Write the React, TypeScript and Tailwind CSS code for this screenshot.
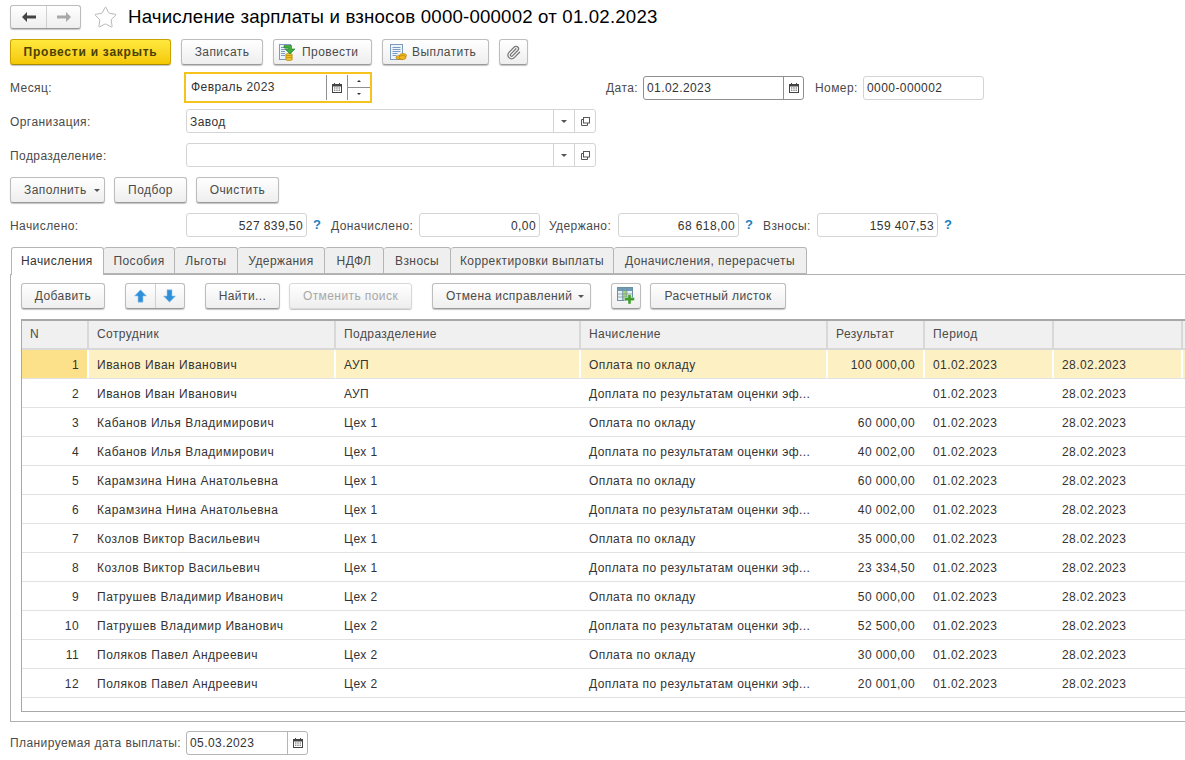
import { Star, Paperclip } from 'lucide-react';

const rows = [
  ['1', 'Иванов Иван Иванович', 'АУП', 'Оплата по окладу', '100 000,00'],
  ['2', 'Иванов Иван Иванович', 'АУП', 'Доплата по результатам оценки эф...', ''],
  ['3', 'Кабанов Илья Владимирович', 'Цех 1', 'Оплата по окладу', '60 000,00'],
  ['4', 'Кабанов Илья Владимирович', 'Цех 1', 'Доплата по результатам оценки эф...', '40 002,00'],
  ['5', 'Карамзина Нина Анатольевна', 'Цех 1', 'Оплата по окладу', '60 000,00'],
  ['6', 'Карамзина Нина Анатольевна', 'Цех 1', 'Доплата по результатам оценки эф...', '40 002,00'],
  ['7', 'Козлов Виктор Васильевич', 'Цех 1', 'Оплата по окладу', '35 000,00'],
  ['8', 'Козлов Виктор Васильевич', 'Цех 1', 'Доплата по результатам оценки эф...', '23 334,50'],
  ['9', 'Патрушев Владимир Иванович', 'Цех 2', 'Оплата по окладу', '50 000,00'],
  ['10', 'Патрушев Владимир Иванович', 'Цех 2', 'Доплата по результатам оценки эф...', '52 500,00'],
  ['11', 'Поляков Павел Андреевич', 'Цех 2', 'Оплата по окладу', '30 000,00'],
  ['12', 'Поляков Павел Андреевич', 'Цех 2', 'Доплата по результатам оценки эф...', '20 001,00'],
];

const tabs = [
  { label: 'Пособия', w: 'w-[71px]' },
  { label: 'Льготы', w: 'w-[63px]' },
  { label: 'Удержания', w: 'w-[87px]' },
  { label: 'НДФЛ', w: 'w-[59px]' },
  { label: 'Взносы', w: 'w-[67px]' },
  { label: 'Корректировки выплаты', w: 'w-[163px]' },
  { label: 'Доначисления, перерасчеты', w: 'w-[193px]' },
];

const btn = 'h-[26px] flex items-center justify-center rounded-[3px] border border-[#bdbdbd] border-b-[#9a9a9a] bg-gradient-to-b from-white to-[#eeeeee] shadow-[0_1px_1px_#c4c4c4] text-[#4a4a4a] shrink-0';

function CalendarIcon() {
  return (
    <svg width="10" height="10" viewBox="0 0 10 10">
      <path d="M2.5 0v2M7.5 0v2" stroke="#444" />
      <rect x="0.5" y="1.5" width="9" height="8" fill="#fff" stroke="#444" />
      <rect x="1" y="2" width="8" height="1.5" fill="#444" />
      <path d="M2 5h1.4M4.3 5h1.4M6.6 5H8M2 7.2h1.4M4.3 7.2h1.4M6.6 7.2H8" stroke="#555" />
    </svg>
  );
}

function Caret() {
  return <div className="w-0 h-0 border-x-[3px] border-x-transparent border-t-[3px] border-t-[#555]" />;
}

function OpenIcon() {
  return (
    <svg width="9" height="9" viewBox="0 0 9 9" fill="none" stroke="#555">
      <rect x="2.5" y="0.5" width="6" height="5.5" fill="#fff" />
      <path d="M2.5 2.5H0.5V8.5H6.5V6" />
    </svg>
  );
}

function Ref({ text }: { text?: string }) {
  return (
    <div className="ml-[2px] w-[410px] h-[24px] flex rounded-[3px] border border-[#d4d4d4]">
      <div className="flex-1 pl-[3px] leading-[24px] text-[#333]">{text}</div>
      <div className="w-[21px] flex items-center justify-center border-l border-[#d4d4d4]"><Caret /></div>
      <div className="w-[21px] flex items-center justify-center border-l border-[#d4d4d4]"><OpenIcon /></div>
    </div>
  );
}

function DateField({ value, w, dark }: { value: string; w: string; dark?: boolean }) {
  return (
    <div className={`${w} h-[24px] flex rounded-[3px] border ${dark ? 'border-[#8f8f8f]' : 'border-[#b5b5b5]'}`}>
      <div className="flex-1 pl-[3px] leading-[22px] text-[#333]">{value}</div>
      <div className={`w-[20px] flex items-center justify-center border-l ${dark ? 'border-[#8f8f8f]' : 'border-[#b5b5b5]'}`}><CalendarIcon /></div>
    </div>
  );
}

function Sum({ value }: { value: string }) {
  return <div className="w-[121px] h-[24px] rounded-[3px] border border-[#d4d4d4] text-right pr-[3px] leading-[24px] text-[#333] shrink-0">{value}</div>;
}

function Hint({ w }: { w: string }) {
  return <div className={`${w} pl-[6px] font-bold text-[#1b7fc4] text-[13px] leading-[26px]`}>?</div>;
}

function PostIcon() {
  return (
    <svg width="17" height="17" viewBox="0 0 17 17">
      <rect x="0.5" y="0.5" width="11" height="15" fill="#eef4fb" stroke="#7d9bbd" />
      <path d="M2 3.5h5M2 5.5h4M2 7.5h4M2 9.5h4M2 11.5h4" stroke="#7d9bbd" />
      <g stroke="#a87a00" strokeWidth="0.6" fill="#f4c430">
        <ellipse cx="10" cy="11" rx="3.5" ry="1.6" />
        <ellipse cx="10" cy="13" rx="3.5" ry="1.6" />
        <ellipse cx="10" cy="15" rx="3.5" ry="1.6" />
      </g>
      <path d="M5 1.5h7.5v3.5H16l-5 5-5-5h3.5V4H5z" fill="#3fae3f" stroke="#217a21" strokeWidth="0.6" />
    </svg>
  );
}

function PayIcon() {
  return (
    <svg width="17" height="17" viewBox="0 0 17 17">
      <rect x="0.5" y="0.5" width="12" height="15" fill="#eef4fb" stroke="#7d9bbd" />
      <path d="M2.5 3.5h8M2.5 5.5h8M2.5 7.5h8M2.5 9.5h5M2.5 11.5h4" stroke="#7d9bbd" />
      <g stroke="#a87a00" strokeWidth="0.6" fill="#f4b820">
        <ellipse cx="9.5" cy="13.5" rx="3.6" ry="2" />
        <ellipse cx="13" cy="11.5" rx="3.5" ry="2" />
        <ellipse cx="12.5" cy="13.5" rx="3.5" ry="2" />
      </g>
    </svg>
  );
}

function TableAddIcon() {
  return (
    <svg width="18" height="18" viewBox="0 0 18 18">
      <rect x="0.5" y="0.5" width="15" height="13" fill="#e6eff5" stroke="#6d8fa5" />
      <rect x="1" y="1" width="14" height="3" fill="#6f9bb5" />
      <rect x="5.5" y="4" width="4.5" height="9" fill="#a6cf78" />
      <path d="M5.5 1v12M10 1v12M1 7h14M1 10h14" stroke="#6d8fa5" strokeWidth="0.7" />
      <path d="M11 7.5h3v3h3.5v3H14V17h-3v-3.5H7.5v-3H11z" fill="#3f9e2c" stroke="#fff" strokeWidth="0.4" />
    </svg>
  );
}

function BlueArrow({ down }: { down?: boolean }) {
  return (
    <svg width="13" height="14" viewBox="0 0 13 14" className={down ? 'rotate-180' : ''}>
      <path d="M6.5 0.8L12.5 7H9v6.2H4V7H0.5z" fill="#2f8fd8" stroke="#9cc9ec" strokeWidth="0.6" />
    </svg>
  );
}

function Cell({ w, right, wide, children }: { w: string; right?: boolean; wide?: boolean; children?: React.ReactNode }) {
  return <div className={`${w} shrink-0 h-full px-[8px] leading-[30px] whitespace-nowrap overflow-hidden border-r-2 border-r-white ${right ? 'text-right' : ''} ${wide ? 'tracking-[0.5px]' : ''}`}>{children}</div>;
}

function Head({ w, children }: { w: string; children?: React.ReactNode }) {
  return <div className={`${w} shrink-0 h-full px-[8px] leading-[26px] border-r-2 border-r-[#d8d8d8]`}>{children}</div>;
}

export default function App() {
  return (
    <div className="w-[1185px] h-[760px] overflow-hidden bg-white text-[12px] tracking-[0.42px] text-[#4a4a4a] font-['Liberation_Sans',Arial,sans-serif]">
      <div className="pl-[10px] pt-[5px]">
        <div className="flex items-center h-[24px]">
          <div className={`${btn} !h-[24px] w-[71px] !justify-start`}>
            <div className="w-[36px] h-full flex items-center justify-center border-r border-[#d0d0d0]">
              <svg width="14" height="10" viewBox="0 0 14 10"><path d="M5 0L0 5l5 5V6.5h9v-3H5z" fill="#444" /></svg>
            </div>
            <div className="flex-1 flex items-center justify-center">
              <svg width="14" height="10" viewBox="0 0 14 10"><path d="M9 0l5 5-5 5V6.5H0v-3h9z" fill="#a8a8a8" /></svg>
            </div>
          </div>
          <Star size={25} strokeWidth={0.8} className="ml-[12px] text-[#a9a9a9]" />
          <h1 className="ml-[10px] text-[18.67px] tracking-[0.18px] text-black">Начисление зарплаты и взносов 0000-000002 от 01.02.2023</h1>
        </div>

        <div className="flex mt-[10px] h-[26px]">
          <div className="w-[161px] h-[26px] flex items-center justify-center rounded-[3px] border border-[#c9a400] border-b-[#a98a00] bg-gradient-to-b from-[#ffe93b] to-[#f5c800] shadow-[0_1px_1px_#c4c4c4] font-bold tracking-[0.75px] text-[#4a4000]">Провести и закрыть</div>
          <div className={`${btn} w-[82px] ml-[10px]`}>Записать</div>
          <div className={`${btn} w-[99px] ml-[10px] !justify-start pl-[5px] gap-[6px]`}><PostIcon />Провести</div>
          <div className={`${btn} w-[107px] ml-[10px] !justify-start pl-[7px] gap-[5px]`}><PayIcon />Выплатить</div>
          <div className={`${btn} w-[29px] ml-[10px]`}><Paperclip size={15} className="text-[#777]" /></div>
        </div>

        <div className="flex items-center mt-[7px] h-[31px]">
          <div className="w-[174px]">Месяц:</div>
          <div className="w-[188px] h-[31px] flex border-2 border-[#f6c21c] text-[#333]">
            <div className="w-[140px] pl-[5px] leading-[27px]">Февраль 2023</div>
            <div className="w-[21px] my-[1px] flex items-center justify-center border-l border-[#8f8f8f]"><CalendarIcon /></div>
            <div className="flex-1 my-[1px] flex flex-col border-l border-[#8f8f8f]">
              <div className="flex-1 flex items-center justify-center border-b border-[#8f8f8f]"><div className="w-0 h-0 border-x-[2px] border-x-transparent border-b-[2px] border-b-[#333]" /></div>
              <div className="flex-1 flex items-center justify-center"><div className="w-0 h-0 border-x-[2px] border-x-transparent border-t-[2px] border-t-[#333]" /></div>
            </div>
          </div>
          <div className="ml-[234px] w-[37px]">Дата:</div>
          <DateField value="01.02.2023" w="w-[161px]" dark />
          <div className="ml-[11px] w-[48px]">Номер:</div>
          <div className="w-[121px] h-[24px] rounded-[3px] border border-[#d4d4d4] pl-[3px] leading-[22px] text-[#333]">0000-000002</div>
        </div>

        <div className="flex items-center mt-[6px]">
          <div className="w-[174px] pt-[2px]">Организация:</div>
          <Ref text="Завод" />
        </div>
        <div className="flex items-center mt-[10px]">
          <div className="w-[174px] pt-[2px]">Подразделение:</div>
          <Ref />
        </div>

        <div className="flex mt-[10px]">
          <div className={`${btn} w-[95px] !justify-start pl-[13px] gap-[7px]`}>Заполнить <Caret /></div>
          <div className={`${btn} w-[73px] ml-[9px]`}>Подбор</div>
          <div className={`${btn} w-[83px] ml-[9px]`}>Очистить</div>
        </div>

        <div className="flex items-center mt-[10px] h-[24px]">
          <div className="w-[176px] pt-[2px]">Начислено:</div>
          <Sum value="527 839,50" />
          <Hint w="w-[24px]" />
          <div className="w-[88px] pt-[2px]">Доначислено:</div>
          <Sum value="0,00" />
          <div className="ml-[9px] w-[69px] pt-[2px]">Удержано:</div>
          <Sum value="68 618,00" />
          <Hint w="w-[24px]" />
          <div className="w-[54px] pt-[2px]">Взносы:</div>
          <Sum value="159 407,53" />
          <Hint w="w-[20px]" />
        </div>

        <div className="flex mt-[10px] h-[27px] relative z-10">
          <div className="w-[93px] h-[28px] ml-[1px] rounded-t-[3px] border border-b-0 border-[#b5b5b5] bg-white pl-[9px] leading-[26px] text-[#333]">Начисления</div>
          {tabs.map(t => (
            <div key={t.label} className={`${t.w} h-[27px] rounded-t-[3px] border border-l-0 border-[#b5b5b5] bg-[#efefef] text-center leading-[26px]`}>{t.label}</div>
          ))}
        </div>

        <div className="w-[1300px] h-[448px] border border-[#b0b0b0] pl-[10px] pt-[8px]">
          <div className="flex h-[26px]">
            <div className={`${btn} w-[84px]`}>Добавить</div>
            <div className={`${btn} w-[60px] ml-[20px]`}>
              <div className="flex-1 h-full flex items-center justify-center border-r border-[#d0d0d0]"><BlueArrow /></div>
              <div className="flex-1 h-full flex items-center justify-center"><BlueArrow down /></div>
            </div>
            <div className={`${btn} w-[75px] ml-[20px]`}>Найти...</div>
            <div className={`${btn} w-[123px] ml-[9px] !text-[#a8a8a8] !border-[#d8d8d8]`}>Отменить поиск</div>
            <div className={`${btn} w-[159px] ml-[20px] !justify-start pl-[13px] gap-[6px]`}>Отмена исправлений <Caret /></div>
            <div className={`${btn} w-[30px] ml-[20px]`}><TableAddIcon /></div>
            <div className={`${btn} w-[136px] ml-[9px]`}>Расчетный листок</div>
          </div>

          <div className="mt-[10px] w-[1280px] h-[393px] border border-[#a8a8a8] border-t-2 text-[#333]">
            <div className="flex h-[29px] bg-[#f0f0f0] text-[#4a4a4a] border-b-2 border-b-[#d8d8d8]">
              <Head w="w-[67px]">N</Head>
              <Head w="w-[247px]">Сотрудник</Head>
              <Head w="w-[245px]">Подразделение</Head>
              <Head w="w-[247px]">Начисление</Head>
              <Head w="w-[97px]">Результат</Head>
              <Head w="w-[129px]">Период</Head>
              <Head w="w-[129px]" />
            </div>
            {rows.map((r, i) => (
              <div key={r[0]} className={`flex h-[29px] border-b border-b-[#e2e2e2] ${i === 0 ? 'bg-[#fdf1c4]' : ''}`}>
                <div className={`w-[67px] shrink-0 pr-[8px] text-right leading-[30px] border-r-2 border-r-white ${i === 0 ? 'bg-[#fde08a]' : ''}`}>{r[0]}</div>
                <Cell w="w-[247px]" wide>{r[1]}</Cell>
                <Cell w="w-[245px]" wide>{r[2]}</Cell>
                <Cell w="w-[247px]">{r[3]}</Cell>
                <Cell w="w-[97px]" right>{r[4]}</Cell>
                <Cell w="w-[129px]">01.02.2023</Cell>
                <Cell w="w-[129px]">28.02.2023</Cell>
              </div>
            ))}
          </div>
        </div>

        <div className="flex items-center mt-[9px]">
          <div className="w-[176px]">Планируемая дата выплаты:</div>
          <DateField value="05.03.2023" w="w-[122px]" />
        </div>
      </div>
    </div>
  );
}
